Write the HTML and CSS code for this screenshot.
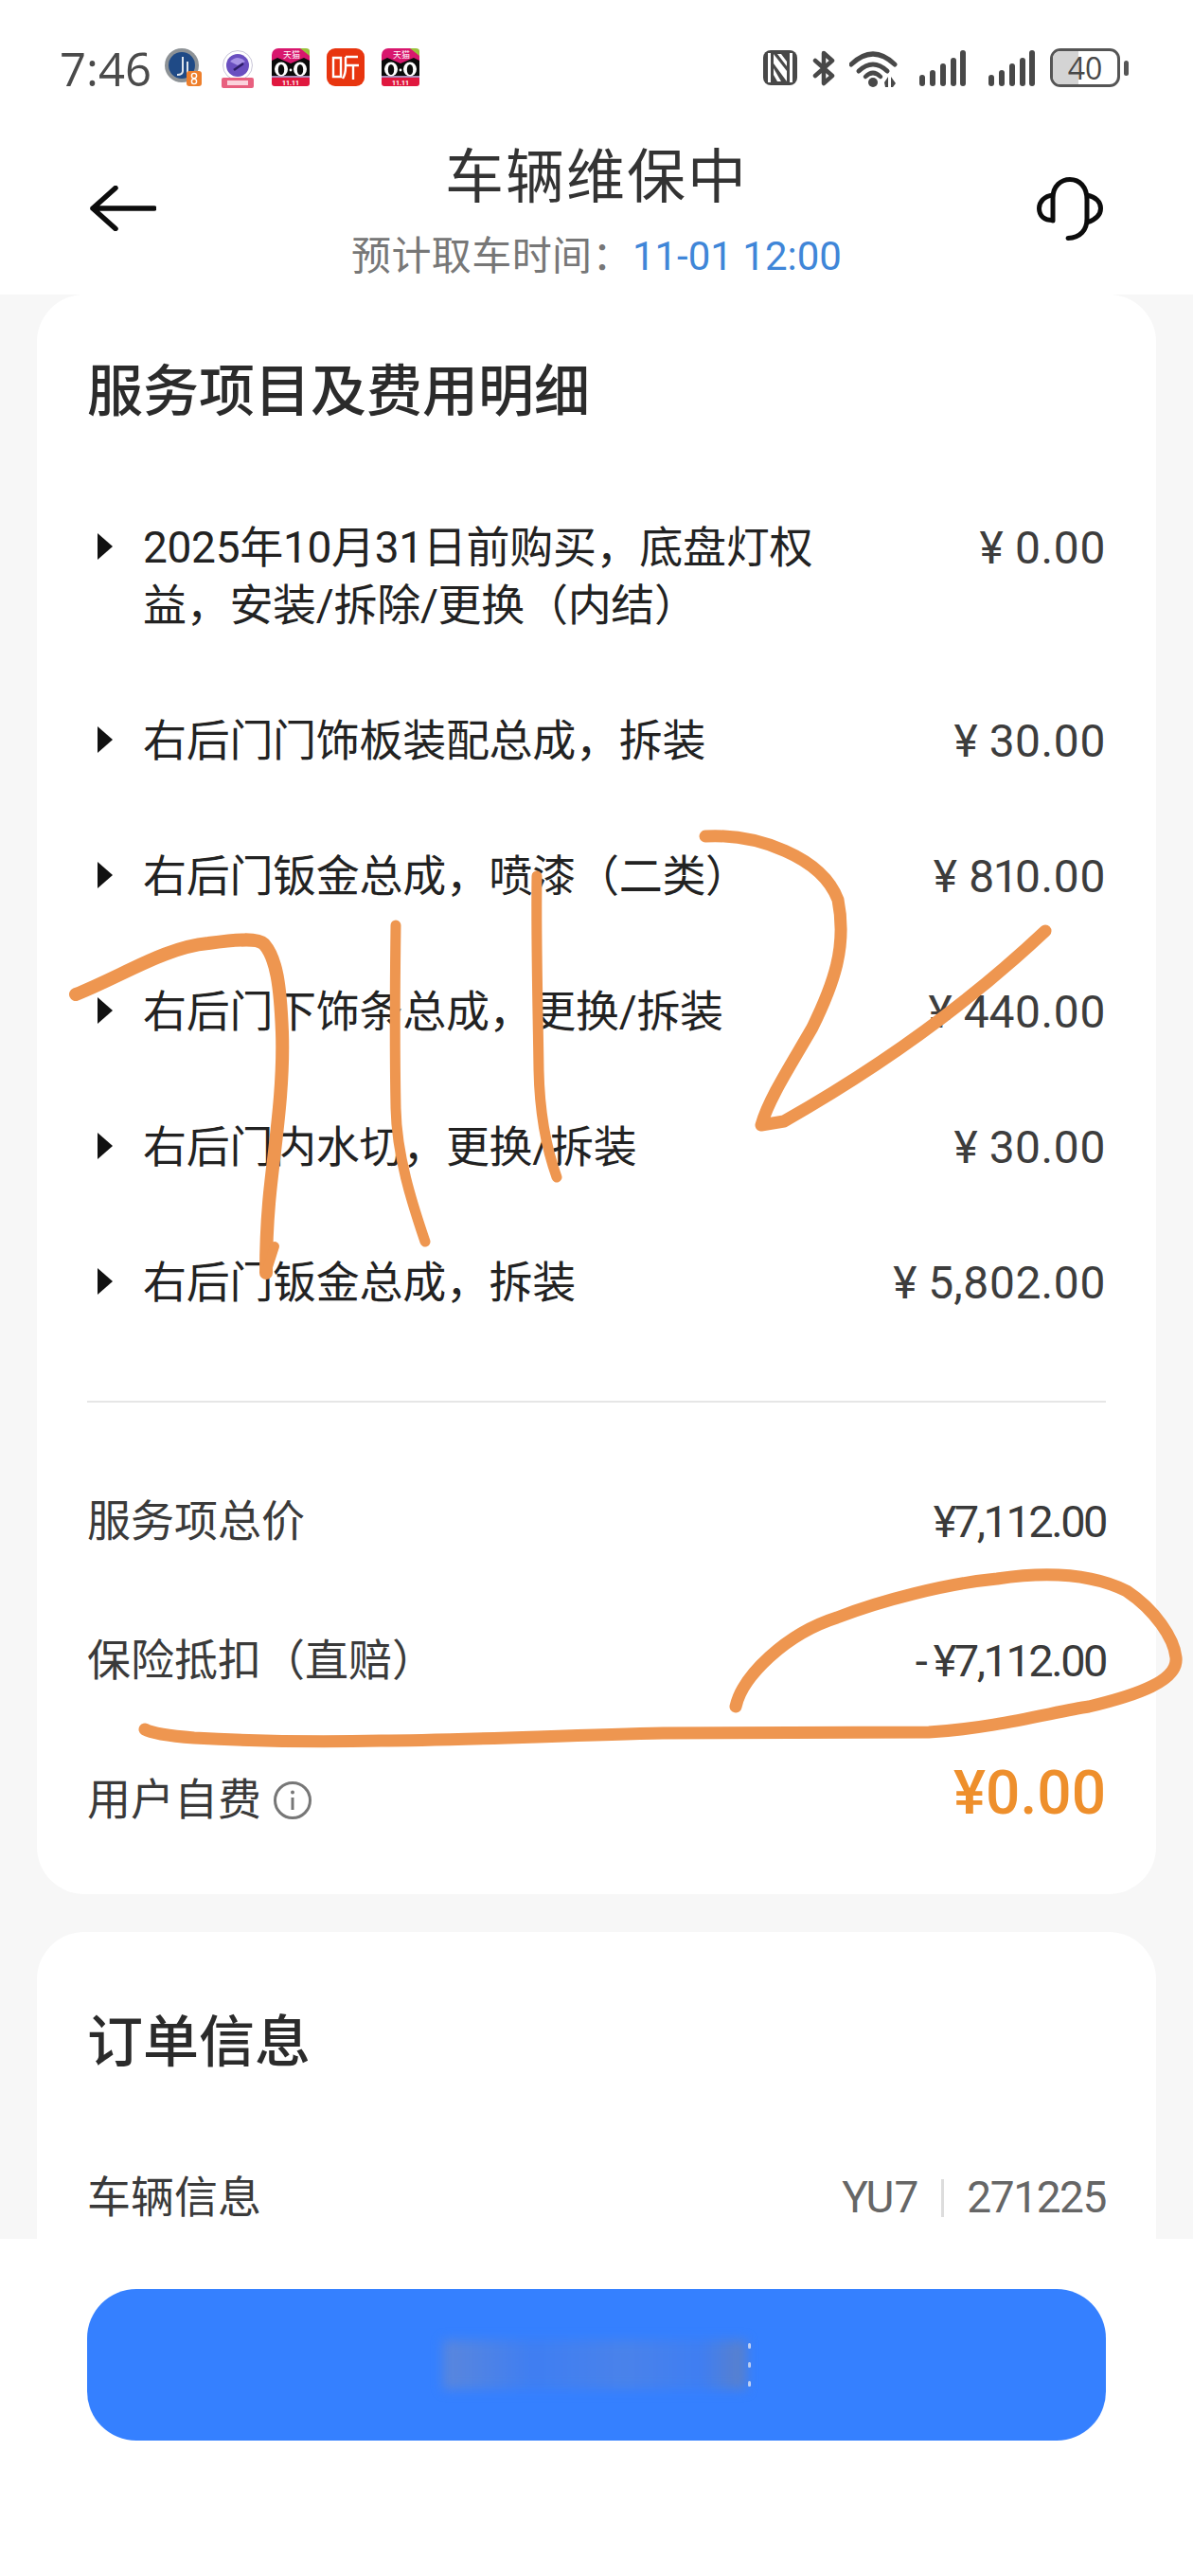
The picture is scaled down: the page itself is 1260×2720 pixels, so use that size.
FILE: index.html
```html
<!DOCTYPE html>
<html lang="zh-CN">
<head>
    <meta charset="UTF-8">
    <meta name="viewport" content="width=device-width, initial-scale=1.0">
    <title>车辆维保中</title>
    <link rel="stylesheet" href="styles.css">
</head>
<body>
    <div class="page">
        <!-- status bar -->
        <div class="status-bar">
            <div class="status-left">
                <span class="clock">7:46</span>
                <svg class="app-icon" width="40" height="40" viewBox="0 0 40 40">
                    <circle cx="19" cy="18" r="18" fill="#8d9296"/>
                    <circle cx="19" cy="18" r="14" fill="#1f4a86"/>
                    <path d="M20 9 V24 Q20 28 14 28 M25 14 V28" fill="none" stroke="#dfe6ee" stroke-width="2"/>
                    <rect x="24" y="24" width="16" height="16" rx="3" fill="#ee7f2c"/>
                    <circle cx="32" cy="29" r="2.6" fill="none" stroke="#fff" stroke-width="1.4"/>
                    <circle cx="32" cy="35" r="2.6" fill="none" stroke="#fff" stroke-width="1.4"/>
                </svg>
                <svg class="app-icon app-gap" width="36" height="40" viewBox="0 0 36 40">
                    <circle cx="18" cy="16" r="15.5" fill="#fff" stroke="#c9c6d8" stroke-width="1"/>
                    <circle cx="18" cy="16" r="12" fill="#6a4fc0"/>
                    <path d="M10 12 Q18 4 26 12 L18 16 Z" fill="#a893e6"/>
                    <path d="M14 21 L24 14" stroke="#2b1c66" stroke-width="2.5"/>
                    <rect x="1" y="29" width="34" height="11" rx="2" fill="#e8607f"/>
                    <rect x="7" y="32" width="22" height="5" fill="#fbd3dc"/>
                </svg>
                <svg class="app-icon app-gap-wide" width="40" height="40" viewBox="0 0 40 40">
                    <rect width="40" height="40" rx="7" fill="#d8176e"/>
                    <path d="M0 13 L6 10 L20 16 L34 10 L40 13 V31 H0 Z" fill="#0b0b0b"/>
                    <path d="M30 0 L40 8 V3 Q40 0 36 0 Z" fill="#9ac23c"/>
                    <rect y="31" width="40" height="9" rx="3" fill="#e0183f"/>
                    <rect y="29" width="40" height="2" fill="#a98bb8"/>
                    <text x="21" y="10" class="tm-top">天猫</text>
                    <ellipse cx="10" cy="22" rx="7" ry="7.5" fill="#fff"/>
                    <ellipse cx="30" cy="22" rx="7" ry="7.5" fill="#fff"/>
                    <ellipse cx="10" cy="22.5" rx="3.2" ry="5.5" fill="#0b0b0b"/>
                    <ellipse cx="30" cy="22.5" rx="3.2" ry="5.5" fill="#0b0b0b"/>
                    <circle cx="20" cy="23" r="1.4" fill="#fff"/>
                    <text x="20" y="38.5" class="tm-date">11.11</text>
                </svg>
                <svg class="app-icon app-gap-wide" width="40" height="40" viewBox="0 0 40 40">
                    <rect width="40" height="40" rx="9" fill="#e8350f"/>
                    <path d="M7 10 H15 V30 H7 Z" fill="none" stroke="#fff" stroke-width="2.4"/>
                    <path d="M20 9 H33 M20 9 V20 Q20 27 17 32 M20 18 H34 M28 18 V33" fill="none" stroke="#fff" stroke-width="2.4"/>
                </svg>
                <svg class="app-icon app-gap-wide" width="40" height="40" viewBox="0 0 40 40">
                    <rect width="40" height="40" rx="7" fill="#d8176e"/>
                    <path d="M0 13 L6 10 L20 16 L34 10 L40 13 V31 H0 Z" fill="#0b0b0b"/>
                    <path d="M30 0 L40 8 V3 Q40 0 36 0 Z" fill="#9ac23c"/>
                    <rect y="31" width="40" height="9" rx="3" fill="#e0183f"/>
                    <rect y="29" width="40" height="2" fill="#a98bb8"/>
                    <text x="21" y="10" class="tm-top">天猫</text>
                    <ellipse cx="10" cy="22" rx="7" ry="7.5" fill="#fff"/>
                    <ellipse cx="30" cy="22" rx="7" ry="7.5" fill="#fff"/>
                    <ellipse cx="10" cy="22.5" rx="3.2" ry="5.5" fill="#0b0b0b"/>
                    <ellipse cx="30" cy="22.5" rx="3.2" ry="5.5" fill="#0b0b0b"/>
                    <circle cx="20" cy="23" r="1.4" fill="#fff"/>
                    <text x="20" y="38.5" class="tm-date">11.11</text>
                </svg>
            </div>
            <div class="status-right">
                <svg width="36" height="37" viewBox="0 0 36 37">
                    <rect width="36" height="37" rx="8" fill="#484848"/>
                    <path d="M5 3 H8 V34 H5 Z M28 3 H31 V34 H28 Z" fill="#fff"/>
                    <path d="M11 4 L25 22 V33 L11 14 Z" fill="#fff"/>
                    <path d="M15 4 H19 L25 12 V17 Z" fill="#fff"/>
                    <path d="M11 19 L19 33 H15 L11 26 Z" fill="#fff"/>
                </svg>
                <svg class="gap-bt" width="25" height="38" viewBox="0 0 25 38">
                    <path d="M3 11 L21 27 L12 35 V3 L21 11 L3 27" fill="none" stroke="#484848" stroke-width="4.5" stroke-linejoin="round" stroke-linecap="round"/>
                </svg>
                <svg class="gap-wifi" width="51" height="40" viewBox="0 0 51 40">
                    <path d="M2 15 Q25 -7 48 15" fill="none" stroke="#484848" stroke-width="5" stroke-linecap="round"/>
                    <path d="M10 22 Q25 8 40 22" fill="none" stroke="#484848" stroke-width="5" stroke-linecap="round"/>
                    <path d="M17 28 Q25 20 33 28" fill="none" stroke="#484848" stroke-width="4.5" stroke-linecap="round"/>
                    <circle cx="25" cy="34" r="5" fill="#484848"/>
                    <path d="M37 34 L41 28 V39 H38 Z M44 28 L49 35 L46 39 H44 Z" fill="#484848"/>
                </svg>
                <svg class="gap-sig1" width="49" height="38" viewBox="0 0 49 38">
                    <rect x="0" y="26" width="6" height="12" rx="3"/>
                    <rect x="11" y="21" width="6" height="17" rx="3"/>
                    <rect x="22" y="14" width="6" height="24" rx="3"/>
                    <rect x="33" y="8" width="6" height="30" rx="3"/>
                    <rect x="43" y="0" width="6" height="38" rx="3"/>
                </svg>
                <svg class="gap-sig2" width="49" height="38" viewBox="0 0 49 38">
                    <rect x="0" y="26" width="6" height="12" rx="3"/>
                    <rect x="11" y="21" width="6" height="17" rx="3"/>
                    <rect x="22" y="14" width="6" height="24" rx="3"/>
                    <rect x="33" y="8" width="6" height="30" rx="3"/>
                    <rect x="43" y="0" width="6" height="38" rx="3"/>
                </svg>
                <div class="battery">
                    <span class="battery-fill"></span>
                    <span class="battery-num">40</span>
                </div>
                <span class="battery-nub"></span>
            </div>
        </div>

        <!-- header -->
        <div class="header">
            <svg width="70" height="48" viewBox="0 0 70 48" class="header-icon back-icon">
                <path d="M27 2.5 L3 24 L27 45.5 M3 24 H68" fill="none" stroke="#0c0c0c" stroke-width="5.5" stroke-linecap="round" stroke-linejoin="round"/>
            </svg>
            <div class="header-center">
                <div class="title">车辆维保中</div>
                <div class="subtitle">预计取车时间：<span class="pickup-time">11-01 12:00</span></div>
            </div>
            <svg width="70" height="67" viewBox="0 0 70 67" class="header-icon">
                <path d="M17 46 V22 C17 9 26 2.500 35 2.500 C45 2.500 53 10 53 24 V44 C53 56 46 64 33 64.500" fill="none" stroke="#0c0c0c" stroke-width="5" stroke-linecap="round"/>
                <path d="M17 19 C8 20 2.500 26 2.500 33 C2.500 41 8 45.500 17 45.500" fill="none" stroke="#0c0c0c" stroke-width="5"/>
                <path d="M53 19 C62 21 67.500 26 67.500 33 C67.500 40 62 45 53 48" fill="none" stroke="#0c0c0c" stroke-width="5"/>
            </svg>
        </div>

        <div class="content">
            <!-- fee details -->
            <div class="card fee-card">
                <h3 class="card-title">服务项目及费用明细</h3>
                <ul class="fee-list">
                    <li class="fee-item">
                        <span class="arrow"></span>
                        <span class="fee-name">2025年10月31日前购买，底盘灯权益，安装/拆除/更换（内结）</span>
                        <span class="fee-price">¥ 0.00</span>
                    </li>
                    <li class="fee-item">
                        <span class="arrow"></span>
                        <span class="fee-name">右后门门饰板装配总成，拆装</span>
                        <span class="fee-price">¥ 30.00</span>
                    </li>
                    <li class="fee-item">
                        <span class="arrow"></span>
                        <span class="fee-name">右后门钣金总成，喷漆（二类）</span>
                        <span class="fee-price">¥ 810.00</span>
                    </li>
                    <li class="fee-item">
                        <span class="arrow"></span>
                        <span class="fee-name">右后门下饰条总成，更换/拆装</span>
                        <span class="fee-price">¥ 440.00</span>
                    </li>
                    <li class="fee-item">
                        <span class="arrow"></span>
                        <span class="fee-name">右后门内水切，更换/拆装</span>
                        <span class="fee-price">¥ 30.00</span>
                    </li>
                    <li class="fee-item">
                        <span class="arrow"></span>
                        <span class="fee-name">右后门钣金总成，拆装</span>
                        <span class="fee-price">¥ 5,802.00</span>
                    </li>
                </ul>
                <div class="divider"></div>
                <div class="summary-row">
                    <span>服务项总价</span>
                    <span class="summary-value">¥7,112.00</span>
                </div>
                <div class="summary-row">
                    <span>保险抵扣（直赔）</span>
                    <span class="summary-value"><span class="minus">-</span>¥7,112.00</span>
                </div>
                <div class="summary-row total-row">
                    <span class="total-label">用户自费
                        <svg class="info-icon" width="42" height="42" viewBox="0 0 42 42">
                            <circle cx="21" cy="21" r="18.500" fill="none" stroke="#777" stroke-width="3"/>
                            <circle cx="21" cy="12.500" r="2" fill="#777"/>
                            <path d="M21 18 V31" stroke="#777" stroke-width="3"/>
                        </svg>
                    </span>
                    <span class="total-value">¥0.00</span>
                </div>
            </div>

            <!-- order info -->
            <div class="card order-card">
                <h3 class="card-title">订单信息</h3>
                <div class="summary-row">
                    <span>车辆信息</span>
                    <span class="vehicle"><span>YU7</span><i class="vehicle-sep"></i><span class="vehicle-no">271225</span></span>
                </div>
            </div>
        </div>

        <div class="footer">
            <div class="main-button">
                <div class="blur-patch"></div>
                <div class="blur-dots"><i></i><i></i><i></i></div>
            </div>
        </div>

        <!-- hand drawn marks on top of the screenshot -->
        <svg class="scribble" width="1260" height="2720" viewBox="0 0 1260 2720">
            <g fill="none" stroke="#ee9650" stroke-linecap="round" stroke-linejoin="round">
                <path stroke-width="14" d="M80 1050 C130 1030 175 1000 220 996 C250 992 272 990 279 997 C292 1012 296 1040 298 1090 C300 1150 290 1210 285 1260 C282 1290 281 1320 281 1344"/>
                <path stroke-width="10" d="M281 1344 L290 1316"/>
                <path stroke-width="11" d="M418 977 C417 1050 417 1120 418 1170 C419 1220 435 1270 449 1311"/>
                <path stroke-width="11" d="M567 925 C566 990 568 1060 569 1130 C570 1180 578 1215 588 1243"/>
                <path stroke-width="13" d="M745 883 C800 880 868 905 885 950 C895 1000 880 1040 858 1085 C835 1125 812 1160 804 1188 L828 1184 Q985 1095 1104 983"/>
                <path stroke-width="13" d="M777 1802 C784 1770 830 1725 884 1708 C930 1690 1000 1672 1053 1667 C1100 1660 1150 1660 1190 1680 C1220 1700 1240 1730 1242 1750 C1245 1775 1200 1790 1150 1802 C1115 1807 1050 1825 981 1829 C900 1829 800 1829 700 1830 C600 1832 480 1838 402 1838 C330 1840 260 1838 205 1835 C180 1833 160 1830 153 1826"/>
            </g>
        </svg>
    </div>
</body>
</html>
```

FILE: styles.css
```css
html, body {
    margin: 0;
    padding: 0;
}

body {
    font-family: Roboto, "Noto Sans CJK SC", sans-serif;
    color: #222;
}

.page {
    position: relative;
    width: 1260px;
    height: 2720px;
    overflow: hidden;
    background-color: #fff;
}

.tm-top {
    font-family: "Noto Sans CJK SC", sans-serif;
    font-size: 9px;
    fill: #fff;
    text-anchor: middle;
}

.tm-date {
    font-family: Roboto, sans-serif;
    font-size: 7px;
    font-weight: 700;
    fill: #fff;
    text-anchor: middle;
}

/* status bar */
.status-bar {
    display: flex;
    justify-content: space-between;
    height: 140px;
    padding: 51px 68px 0 63px;
    box-sizing: border-box;
}

.status-left,
.status-right {
    display: flex;
    align-items: flex-start;
}

.clock {
    font-family: "Open Sans", Roboto, sans-serif;
    font-size: 49px;
    line-height: 42px;
    color: #4a4a4a;
    width: 110px;
}

.app-gap {
    margin-left: 20px;
    margin-top: 2px;
}

.app-gap-wide {
    margin-left: 18px;
}

.status-right svg {
    margin-top: 2px;
}

.status-right {
    fill: #484848;
}

.gap-bt { margin-left: 16px; }
.gap-wifi { margin-left: 14px; }
.gap-sig1 { margin-left: 23px; }
.gap-sig2 { margin-left: 24px; }

.battery {
    position: relative;
    width: 74px;
    height: 41px;
    margin-left: 16px;
    box-sizing: border-box;
    border: 3px solid #555;
    border-radius: 11px;
    overflow: hidden;
}

.battery-fill {
    position: absolute;
    left: 0;
    top: 0;
    bottom: 0;
    width: 27px;
    background-color: #d4d4d4;
}

.battery-num {
    position: relative;
    display: block;
    text-align: center;
    font-family: "Open Sans", Roboto, sans-serif;
    font-size: 32px;
    line-height: 35px;
    color: #484848;
}

.battery-nub {
    width: 5px;
    height: 16px;
    margin: 13px 0 0 4px;
    border-radius: 3px;
    background-color: #555;
}

/* header */
.header {
    display: flex;
    justify-content: space-between;
    align-items: flex-start;
    height: 171px;
    padding: 6px 95px 0;
    box-sizing: border-box;
}

.header-icon {
    flex: none;
    margin-top: 41px;
}

.back-icon {
    margin-top: 50px;
}

.header-center {
    text-align: center;
}

.title {
    font-size: 62px;
    line-height: 84px;
    letter-spacing: 2px;
    color: #333;
}

.subtitle {
    margin-top: 11px;
    font-size: 42px;
    line-height: 60px;
    letter-spacing: 0.4px;
    color: #777;
}

.pickup-time {
    color: #3f86d8;
    letter-spacing: 0;
}

/* cards */
.content {
    height: 2053px;
    padding: 0 39px;
    overflow: hidden;
    background-color: #f7f7f7;
}

.card {
    background-color: #fff;
    border-radius: 50px;
    padding: 63px 53px 69px;
}

.order-card {
    margin-top: 40px;
    padding-top: 77px;
}

.card-title {
    margin: 0;
    font-size: 59px;
    line-height: 80px;
    font-weight: 500;
    color: #2b2b2b;
}

.fee-list {
    list-style-type: none;
    margin: 94px 0 0;
    padding: 0;
}

.fee-item {
    display: flex;
    font-size: 46px;
    line-height: 61px;
    margin-bottom: 82px;
}

.fee-item:last-child {
    margin-bottom: 0;
}

.arrow {
    flex: none;
    width: 0;
    height: 0;
    margin: 15px 32px 0 11px;
    border-left: 16px solid #111;
    border-top: 14px solid transparent;
    border-bottom: 14px solid transparent;
}

.fee-name {
    width: 730px;
    letter-spacing: -0.3px;
    color: #222;
}

.fee-price {
    margin-left: auto;
    font-size: 48px;
    font-variant-numeric: proportional-nums;
    color: #3d3d3d;
    white-space: nowrap;
}

.divider {
    height: 2px;
    margin: 94px 0 95px;
    background-color: #e6e6e6;
}

.summary-row {
    display: flex;
    justify-content: space-between;
    font-size: 46px;
    line-height: 61px;
    color: #3a3a3a;
    margin-bottom: 86px;
}

.summary-value {
    font-size: 47px;
    letter-spacing: -2.500px;
}

.minus {
    letter-spacing: 6px;
}

.total-row {
    align-items: flex-start;
    margin-bottom: 0;
}

.total-label {
    display: flex;
    align-items: center;
}

.info-icon {
    margin-left: 12px;
}

.total-value {
    margin-top: -7px;
    font-size: 64px;
    font-weight: 500;
    color: #ee8f2c;
}

.order-card .card-title {
    margin-bottom: 93px;
}

.vehicle {
    display: flex;
    align-items: center;
    color: #666;
}

.vehicle-no {
    letter-spacing: -1.400px;
}

.vehicle-sep {
    width: 3px;
    height: 40px;
    margin: 0 24px;
    background-color: #ddd;
}

/* bottom button */
.footer {
    height: 356px;
    padding: 53px 92px 0;
    box-sizing: border-box;
    background-color: #fff;
}

.main-button {
    position: relative;
    display: flex;
    justify-content: center;
    align-items: center;
    height: 160px;
    border-radius: 52px;
    background-color: #3580ff;
}

.blur-patch {
    width: 320px;
    height: 52px;
    background-image: linear-gradient(90deg, #5a86dc, #3f7ef2 30%, #4a82ea 60%, #3f7ef2 85%, #5c80c8);
    filter: blur(6px);
}

.blur-dots {
    display: flex;
    flex-direction: column;
    gap: 14px;
    margin-left: 2px;
}

.blur-dots i {
    display: block;
    width: 3px;
    height: 6px;
    border-radius: 2px;
    background-color: #dfe9ff;
}

.scribble {
    position: absolute;
    left: 0;
    top: 0;
    pointer-events: none;
}
```
